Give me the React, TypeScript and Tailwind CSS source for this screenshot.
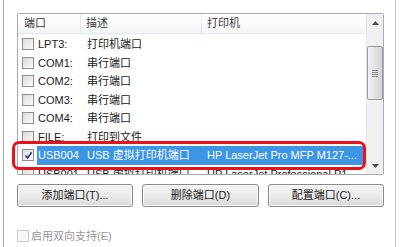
import React from "react";

type Port = { name: string; desc: string; printer: string; checked?: boolean; selected?: boolean };

const ports: Port[] = [
  { name: "LPT3:", desc: "打印机端口", printer: "" },
  { name: "COM1:", desc: "串行端口", printer: "" },
  { name: "COM2:", desc: "串行端口", printer: "" },
  { name: "COM3:", desc: "串行端口", printer: "" },
  { name: "COM4:", desc: "串行端口", printer: "" },
  { name: "FILE:", desc: "打印到文件", printer: "" },
  { name: "USB004", desc: "USB 虚拟打印机端口", printer: "HP LaserJet Pro MFP M127-...", checked: true, selected: true },
  { name: "USB001", desc: "USB 虚拟打印机端口", printer: "HP LaserJet Professional P1..." },
];

const font = "font-['Liberation_Sans','Noto_Sans_CJK_SC',sans-serif]";

const CheckBox = ({ checked, disabled }: { checked?: boolean; disabled?: boolean }) => (
  <span
    className={`flex h-[12px] w-[12px] shrink-0 items-center justify-center border ${
      disabled ? "border-[#c8c8c8] bg-[#f7f7f7]" : "border-[#8e8f8f] bg-gradient-to-br from-[#dcdcdc] to-[#fbfbfb]"
    }`}
  >
    {checked && (
      <svg width="9" height="9" viewBox="0 0 9 9">
        <path d="M1.5 4.5 L3.6 7 L7.6 1.3" fill="none" stroke="#1f3c88" strokeWidth="1.6" />
      </svg>
    )}
  </span>
);

const Button = ({ label, className }: { label: string; className: string }) => (
  <button
    className={`h-[23px] rounded-[3px] border border-[#8a8a8a] bg-gradient-to-b from-[#f4f4f4] via-[#ececec] to-[#dadada] text-[11px] text-[#222] shadow-[inset_0_0_0_1px_#fcfcfc] ${className}`}
  >
    {label}
  </button>
);

export default function App() {
  return (
    <div className={`relative flex h-[247px] w-[400px] overflow-hidden bg-white ${font}`}>
      <div className="ml-[3px] w-px bg-[#a9a9a9]" />
      <div className="flex flex-1 flex-col pl-[13px] pt-[13px]">
        {/* Port list */}
        <div className="flex h-[162px] w-[367px] overflow-hidden rounded-[2px] border border-[#a5acb5]">
          <div className="flex flex-1 flex-col">
            <div className="flex h-[20px] shrink-0 items-center border-b border-[#e3e8ee] bg-gradient-to-b from-white to-[#f4f6f8] text-[11px] text-[#3a3a3a]">
              <div className="flex h-full w-[63px] items-center border-r border-[#e3e8ee] pl-[6px]">端口</div>
              <div className="flex h-full w-[121px] items-center border-r border-[#e3e8ee] pl-[5px]">描述</div>
              <div className="flex h-full flex-1 items-center pl-[5px]">打印机</div>
            </div>
            <div className="flex flex-col pt-px">
              {ports.map((p) => (
                <div key={p.name} className="flex h-[18.5px] shrink-0 items-center text-[11px] text-[#1a1a1a]">
                  <div className="flex w-[19px] justify-end pr-[3px]">
                    <CheckBox checked={p.checked} />
                  </div>
                  <div
                    className={`flex h-full flex-1 items-center ${
                      p.selected ? "mr-[2px] bg-[#3d95e6] text-white" : ""
                    }`}
                  >
                    <span className="w-[49px] pl-px">{p.name}</span>
                    <span className="w-[121px] pl-[1px]">{p.desc}</span>
                    <span className="flex-1 whitespace-nowrap">{p.printer}</span>
                  </div>
                </div>
              ))}
            </div>
          </div>
          {/* Scrollbar */}
          <div className="flex w-[17px] flex-col border-l border-[#e6e6e6] bg-[#f0f0f0]">
            <div className="flex h-[17px] items-center justify-center">
              <svg width="7" height="4" viewBox="0 0 7 4">
                <path d="M0 4 L3.5 0 L7 4 Z" fill="#4d4d4d" />
              </svg>
            </div>
            <div className="mt-[15px] flex h-[54px] items-center justify-center rounded-[2px] border border-[#9c9c9c] bg-gradient-to-r from-[#f2f2f2] via-[#e2e2e2] to-[#d2d2d2]">
              <div className="flex flex-col gap-px">
                <div className="h-px w-[6px] bg-[#8a8a8a]" />
                <div className="h-px w-[6px] bg-[#8a8a8a]" />
                <div className="h-px w-[6px] bg-[#8a8a8a]" />
                <div className="h-px w-[6px] bg-[#8a8a8a]" />
              </div>
            </div>
            <div className="flex-1" />
            <div className="flex h-[17px] items-center justify-center">
              <svg width="7" height="4" viewBox="0 0 7 4">
                <path d="M0 0 L7 0 L3.5 4 Z" fill="#4d4d4d" />
              </svg>
            </div>
          </div>
        </div>

        {/* Buttons */}
        <div className="mt-[9px] flex gap-[9px]">
          <Button label="添加端口(T)..." className="w-[116px]" />
          <Button label="删除端口(D)" className="w-[117px]" />
          <Button label="配置端口(C)..." className="w-[116px]" />
        </div>

        {/* Bidirectional support */}
        <div className="mt-[21px] flex items-center gap-[2px] text-[11px] text-[#9a9a9a]">
          <CheckBox disabled />
          <span>启用双向支持(E)</span>
        </div>
      </div>
      <div className="mr-[4px] w-px bg-[#c4c4c4]" />

      {/* Red annotation around the selected row */}
      <div className="pointer-events-none absolute left-[12px] top-[141px] h-[29px] w-[354px] rounded-[7px] border-[3px] border-[#e8121a]" />
    </div>
  );
}
